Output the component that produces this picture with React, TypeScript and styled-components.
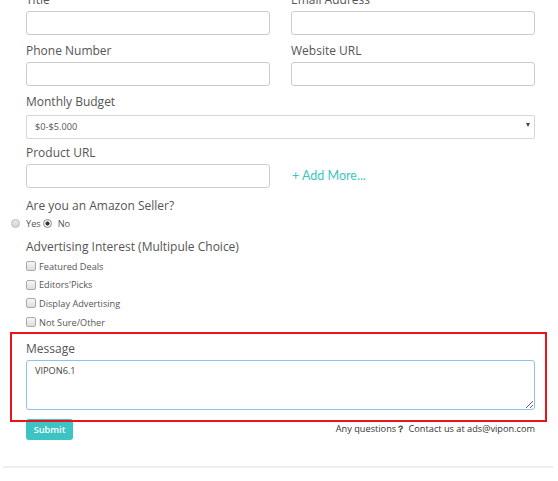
import React from "react";
import styled, { createGlobalStyle } from "styled-components";

const GlobalStyle = createGlobalStyle`
  html, body {
    margin: 0;
    padding: 0;
    background: #fff;
  }
  body {
    font-family: "Open Sans", "Liberation Sans", sans-serif;
    color: #555;
    overflow: hidden;
  }
`;

const colors = {
  label: "#555",
  border: "#ccc",
  teal: "#3cc4c4",
};

const Page = styled.div`
  width: 558px;
  height: 481px;
  overflow: hidden;
  position: relative;
`;

const Form = styled.form`
  width: 509px;
  margin: -9px 0 0 26px;
  display: flex;
  flex-direction: column;
`;

const Row = styled.div`
  display: grid;
  grid-template-columns: 244px 244px;
  column-gap: 21px;
  align-items: end;
`;

const Group = styled.div`
  display: flex;
  flex-direction: column;
  margin-bottom: 7px;
  position: relative;
`;

const Label = styled.label`
  font-size: 12px;
  line-height: 18px;
  height: 18px;
  color: ${colors.label};
  margin-bottom: 2px;
`;

const Input = styled.input`
  box-sizing: border-box;
  height: 24px;
  width: 100%;
  border: 1px solid ${colors.border};
  border-radius: 3px;
  padding: 0 8px;
  font: inherit;
  font-size: 10px;
  outline: none;
`;

const SelectWrap = styled.div`
  position: relative;
  height: 24px;
`;

const Select = styled.select`
  box-sizing: border-box;
  width: 100%;
  height: 24px;
  border: 1px solid #d6d6d6;
  border-radius: 2px;
  padding: 0 8px;
  background: #fff;
  appearance: none;
  font-family: "Open Sans", sans-serif;
  font-size: 9.2px;
  color: #555;
  outline: none;
`;

const Caret = styled.span`
  position: absolute;
  right: 5px;
  top: 10px;
  width: 0;
  height: 0;
  border-left: 2.5px solid transparent;
  border-right: 2.5px solid transparent;
  border-top: 4px solid #444;
  pointer-events: none;
`;

const AddMore = styled.a`
  display: block;
  font-family: Lato, "Open Sans", sans-serif;
  font-size: 12.5px;
  color: ${colors.teal};
  line-height: 24px;
  padding-left: 1px;
  text-decoration: none;
`;

const SectionTitle = styled.div`
  font-size: 12px;
  line-height: 18px;
  color: ${colors.label};
  margin-top: 2px;
`;

const RadioRow = styled.div`
  display: flex;
  align-items: center;
  margin: 0 0 5px -15px;
  height: 16px;
  font-size: 9.2px;
  color: #555;
`;

const Radio = styled.span<{ $checked?: boolean }>`
  box-sizing: border-box;
  width: 9px;
  height: 9px;
  border-radius: 50%;
  border: 1px solid ${(p) => (p.$checked ? "#8a8a8a" : "#bbb")};
  background: ${(p) =>
    p.$checked
      ? "radial-gradient(circle, #333 0 1.8px, #f2f2f2 2.3px)"
      : "linear-gradient(#e9e9e9, #d5d5d5)"};
  margin-right: 6px;
`;

const RadioText = styled.span`
  margin-right: 2px;
`;

const CheckList = styled.div`
  display: flex;
  flex-direction: column;
  margin-top: 1px;
  margin-bottom: 4px;
`;

const CheckItem = styled.label`
  display: flex;
  align-items: center;
  height: 18.6px;
  font-size: 9.2px;
  color: #555;
`;

const Box = styled.span`
  box-sizing: border-box;
  width: 10px;
  height: 10px;
  border: 1px solid #aaa;
  border-radius: 2px;
  background: linear-gradient(#f6f6f6, #dedede);
  margin-right: 3px;
`;

const Highlight = styled(Group)`
  margin-top: 5px;
  margin-bottom: 0;
  &::after {
    content: "";
    position: absolute;
    top: -8px;
    left: -16px;
    right: -12px;
    bottom: -12px;
    border: 2px solid #e8141b;
    pointer-events: none;
  }
`;

const TextArea = styled.textarea`
  box-sizing: border-box;
  width: 100%;
  height: 50px;
  border: 1px solid #8fc1ec;
  border-radius: 3px;
  padding: 3px 8px;
  font-family: "Open Sans", sans-serif;
  font-size: 9.2px;
  color: #444;
  outline: none;
  resize: vertical;
`;

const Footer = styled.div`
  display: flex;
  justify-content: space-between;
  align-items: center;
  margin-top: 8.5px;
`;

const Submit = styled.button`
  height: 21px;
  width: 47px;
  border: none;
  border-radius: 3px;
  background: ${colors.teal};
  color: #fff;
  font-family: "Open Sans", sans-serif;
  font-size: 9.2px;
  font-weight: 600;
  padding: 0;
`;

const Contact = styled.div`
  font-size: 9.2px;
  color: #333;
  line-height: 20px;
  b {
    font-weight: 700;
    margin-right: 1px;
  }
`;

const Rule = styled.hr`
  margin: 26px 5px 0 -23px;
  width: 550px;
  border: none;
  border-top: 2px solid #eee;
`;

const checks = ["Featured Deals", "Editors'Picks", "Display Advertising", "Not Sure/Other"];

export default function App() {
  return (
    <Page>
      <GlobalStyle />
      <Form>
        <Row>
          <Group>
            <Label>Title</Label>
            <Input />
          </Group>
          <Group>
            <Label>Email Address</Label>
            <Input />
          </Group>
        </Row>
        <Row>
          <Group>
            <Label>Phone Number</Label>
            <Input />
          </Group>
          <Group>
            <Label>Website URL</Label>
            <Input />
          </Group>
        </Row>
        <Group>
          <Label>Monthly Budget</Label>
          <SelectWrap>
            <Select defaultValue="0">
              <option value="0">$0-$5.000</option>
            </Select>
            <Caret />
          </SelectWrap>
        </Group>
        <Row>
          <Group>
            <Label>Product URL</Label>
            <Input />
          </Group>
          <Group>
            <AddMore>+ Add More...</AddMore>
          </Group>
        </Row>
        <SectionTitle>Are you an Amazon Seller?</SectionTitle>
        <RadioRow>
          <Radio />
          <RadioText>Yes</RadioText>
          <Radio $checked />
          <RadioText>No</RadioText>
        </RadioRow>
        <SectionTitle>Advertising Interest (Multipule Choice)</SectionTitle>
        <CheckList>
          {checks.map((c) => (
            <CheckItem key={c}>
              <Box />
              {c}
            </CheckItem>
          ))}
        </CheckList>
        <Highlight>
          <Label>Message</Label>
          <TextArea defaultValue="VIPON6.1" />
        </Highlight>
        <Footer>
          <Submit type="button">Submit</Submit>
          <Contact>
            Any questions<b>？</b> Contact us at ads@vipon.com
          </Contact>
        </Footer>
        <Rule />
      </Form>
    </Page>
  );
}
